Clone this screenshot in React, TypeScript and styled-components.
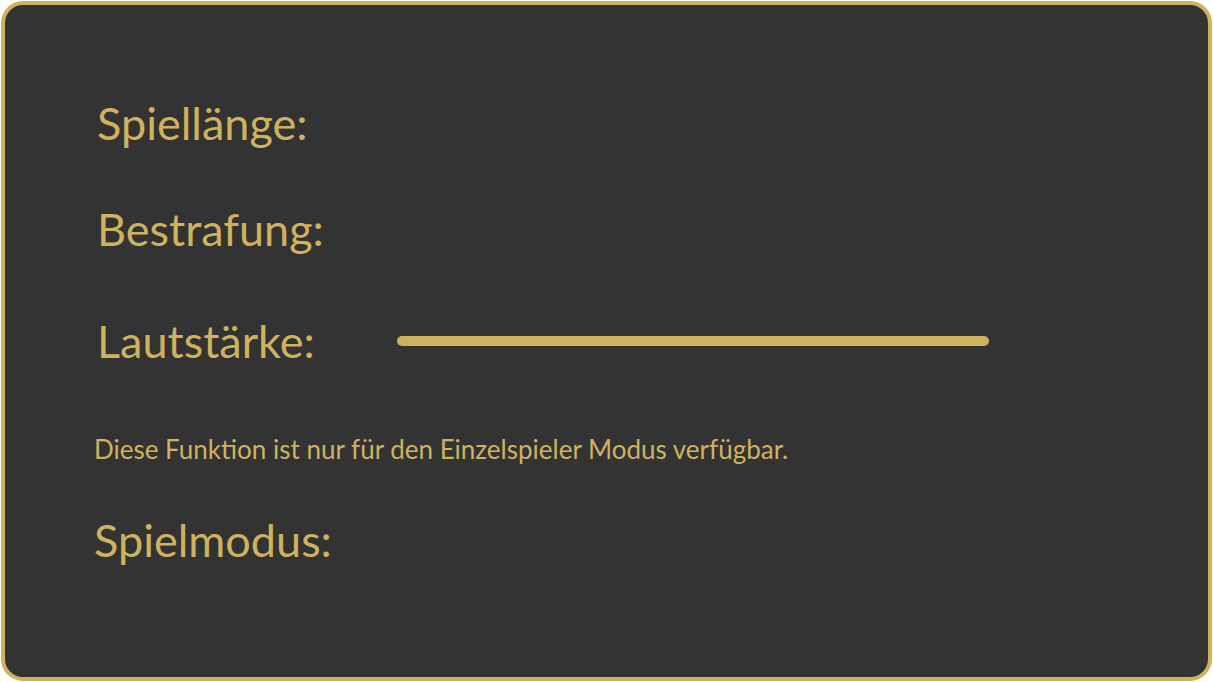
import React from "react";
import styled, { createGlobalStyle } from "styled-components";

const Global = createGlobalStyle`
  html, body { margin: 0; padding: 0; background: #ffffff; }
  body { padding: 1px; box-sizing: border-box; width: 1213px; height: 682px; }
  #root { height: 100%; }
`;

const gold = "#cfb25e";

const Panel = styled.div`
  box-sizing: border-box;
  width: 1211px;
  height: 680px;
  background: #333333;
  border: 4px solid ${gold};
  border-radius: 22px;
  padding: 90px 0 0 89px;
  display: flex;
  flex-direction: column;
  font-family: "Lato", "Open Sans", sans-serif;
  color: ${gold};
`;

const Row = styled.div<{ $h: number; $gap: number }>`
  height: ${(p) => p.$h}px;
  margin-top: ${(p) => p.$gap}px;
  display: flex;
  align-items: center;
`;

const Label = styled.div<{ $indent?: number }>`
  font-size: 45px;
  line-height: 56px;
  width: 300px;
  padding-left: ${(p) => p.$indent ?? 3}px;
  white-space: nowrap;
`;

const Note = styled.div`
  font-size: 26px;
  line-height: 30px;
  white-space: nowrap;
`;

const Track = styled.div`
  width: 592px;
  height: 10px;
  border-radius: 5px;
  background: ${gold};
`;

export default function App() {
  return (
    <>
      <Global />
      <Panel>
        <Row $h={56} $gap={0}>
          <Label>Spiellänge:</Label>
        </Row>
        <Row $h={56} $gap={50}>
          <Label>Bestrafung:</Label>
        </Row>
        <Row $h={56} $gap={56}>
          <Label>Lautstärke:</Label>
          <Track />
        </Row>
        <Row $h={30} $gap={65}>
          <Note>Diese Funktion ist nur für den Einzelspieler Modus verfügbar.</Note>
        </Row>
        <Row $h={56} $gap={48}>
          <Label $indent={0}>Spielmodus:</Label>
        </Row>
      </Panel>
    </>
  );
}
